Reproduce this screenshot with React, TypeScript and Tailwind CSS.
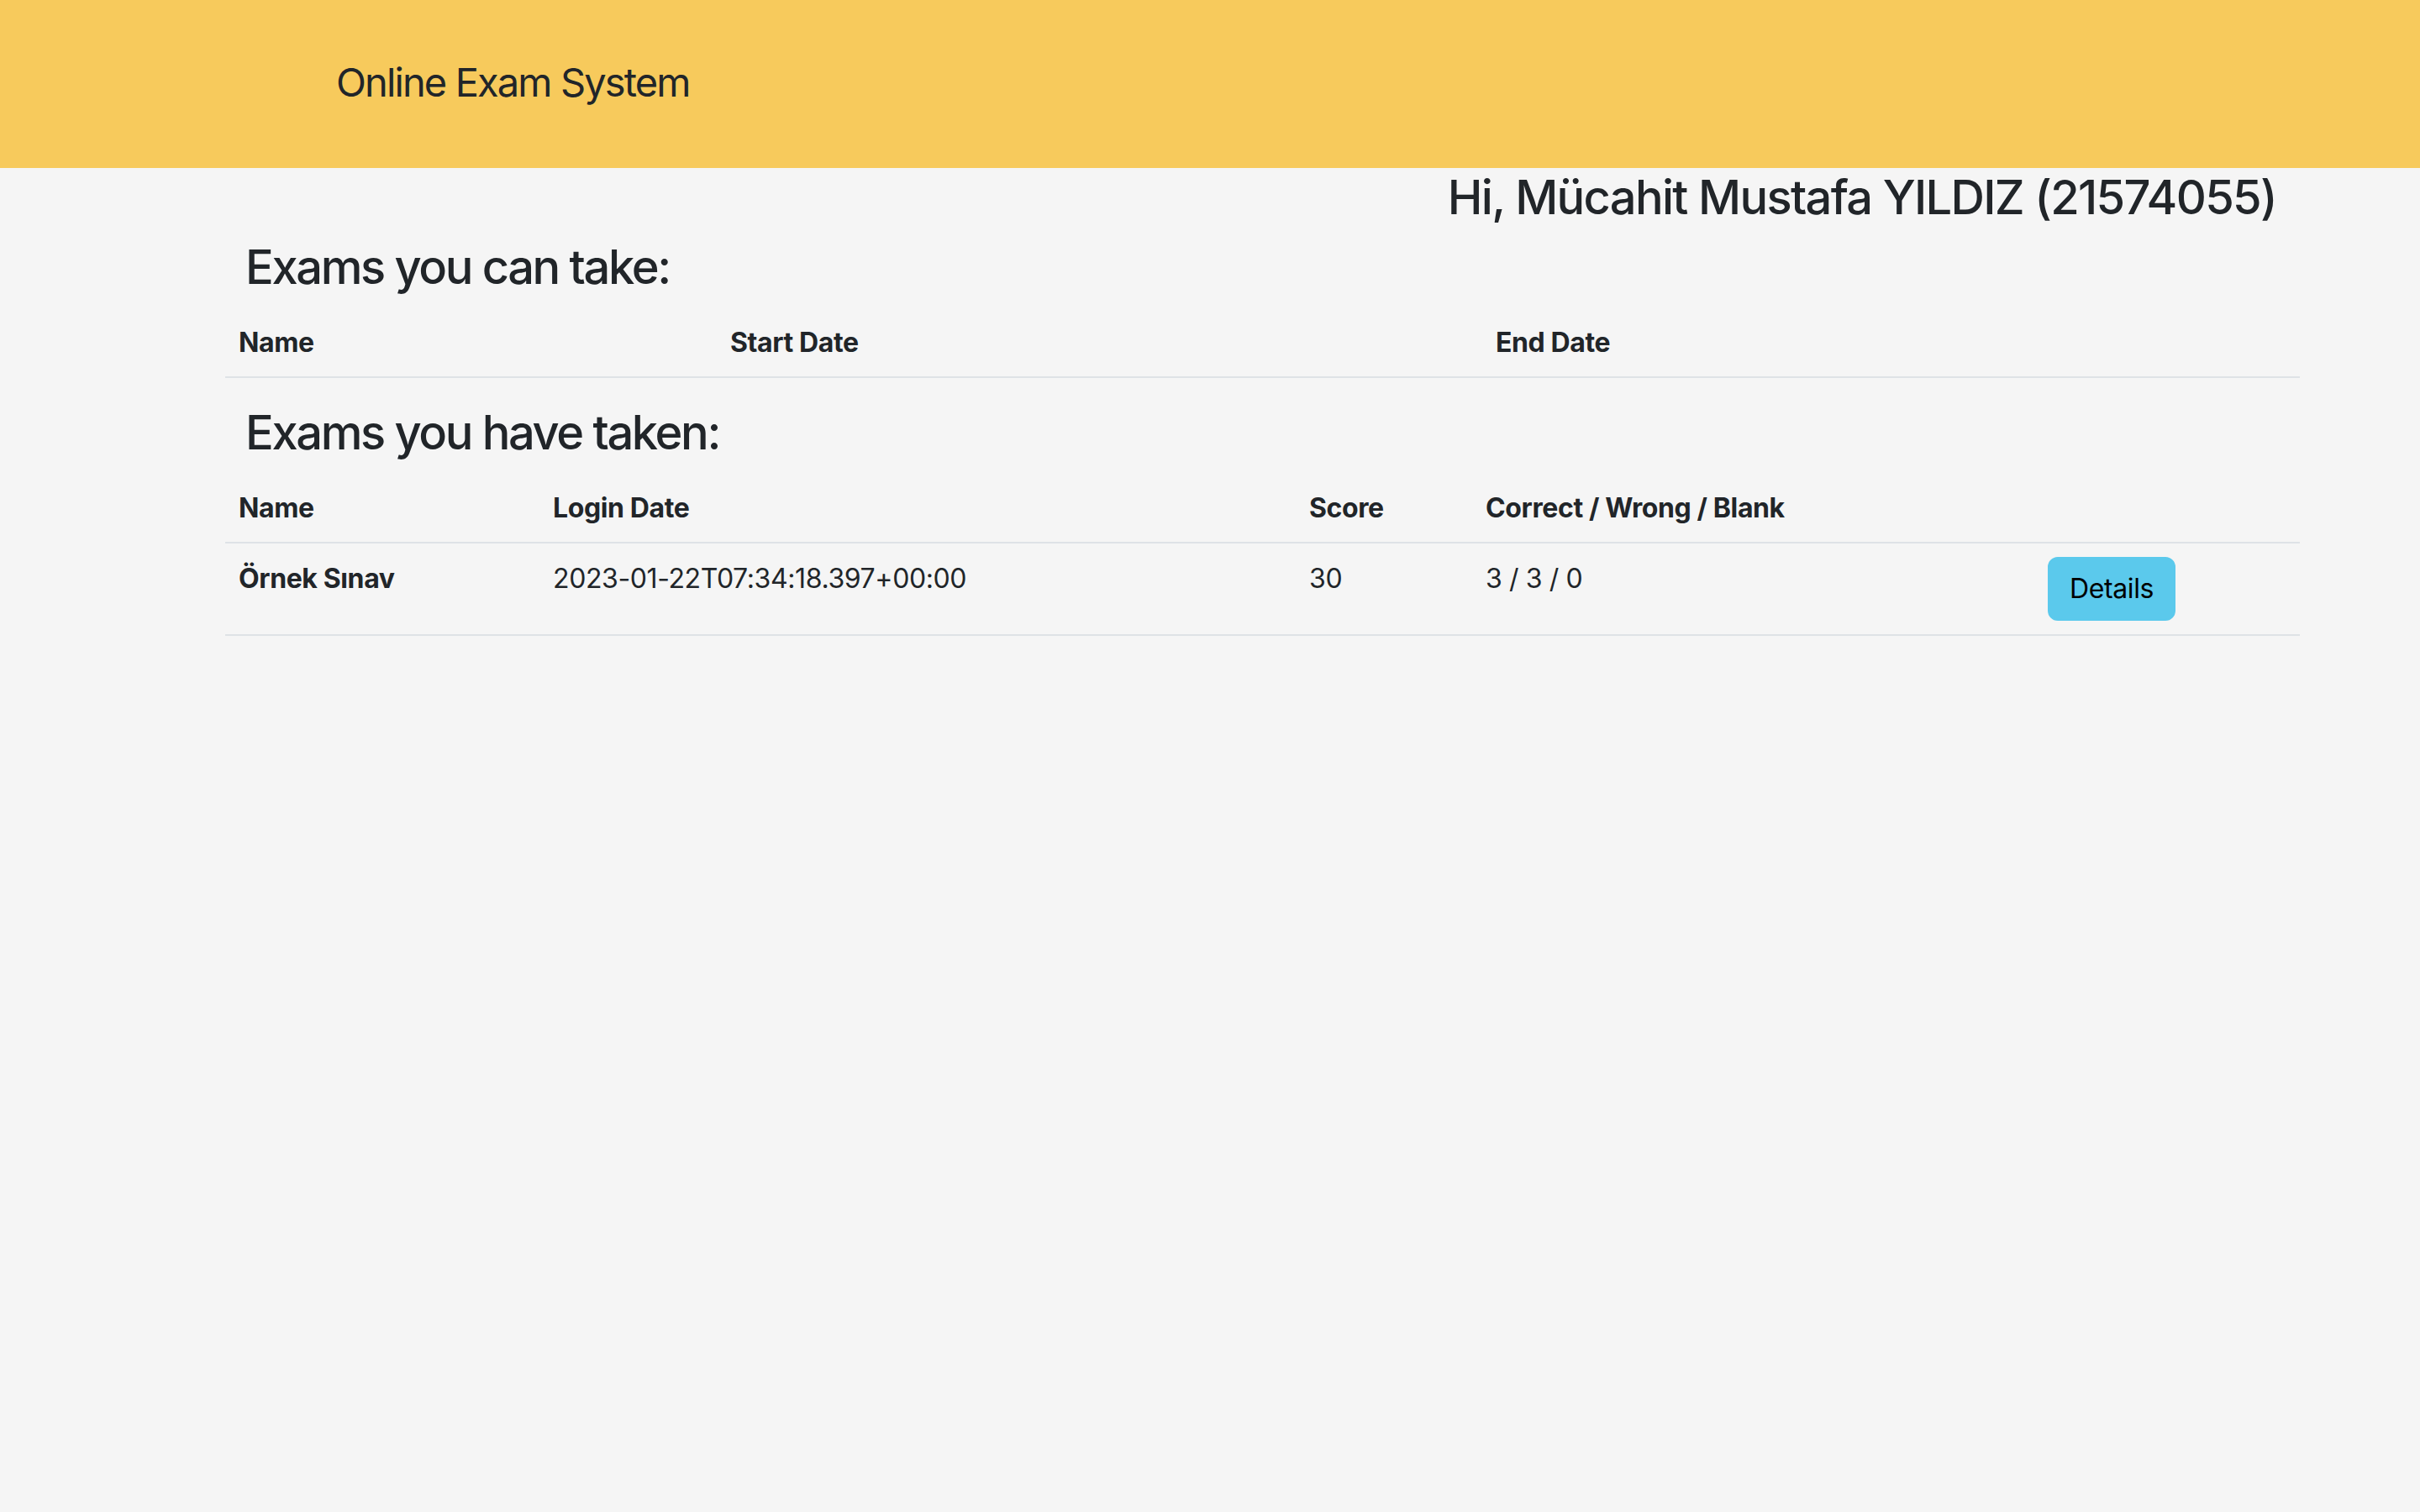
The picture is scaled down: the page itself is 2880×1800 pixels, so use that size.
const font = { fontFamily: "Inter, 'Noto Sans', sans-serif" };

const takenExams = [
  {
    name: "Örnek Sınav",
    loginDate: "2023-01-22T07:34:18.397+00:00",
    score: 30,
    correct: 3,
    wrong: 3,
    blank: 0,
  },
];

const Header = () => (
  <header className="h-[200px] bg-[#f7ca5c] flex items-center pl-[400px] pb-[6px]">
    <span className="text-[47px] leading-none tracking-[-0.04em] text-[#212529]">
      Online Exam System
    </span>
  </header>
);

const App = () => {
  return (
    <div
      style={font}
      className="min-h-screen bg-[#f5f5f5] text-[#212529] text-[32px] leading-[48px] tracking-[-0.012em]"
    >
      <Header />
      <main className="ml-[268px] w-[2469px]">
        <h3 className="text-[56px] leading-[67px] font-medium tracking-[-0.03em] text-right pr-[28px] pt-[2px] mb-[16px]">
          Hi, Mücahit Mustafa YILDIZ (21574055)
        </h3>

        <h3 className="text-[56px] leading-[67px] font-medium tracking-[-0.042em] pl-[24px] mb-[16px]">
          Exams you can take:
        </h3>
        <table className="w-full table-fixed border-collapse mb-[32px]">
          <colgroup>
            <col className="w-[585px]" />
            <col className="w-[911px]" />
            <col />
          </colgroup>
          <thead>
            <tr className="border-b-2 border-[#dee2e6] text-left">
              <th className="p-[16px] font-bold">Name</th>
              <th className="p-[16px] font-bold">Start Date</th>
              <th className="p-[16px] font-bold">End Date</th>
            </tr>
          </thead>
          <tbody></tbody>
        </table>

        <h3 className="text-[56px] leading-[67px] font-medium tracking-[-0.042em] pl-[24px] mb-[16px]">
          Exams you have taken:
        </h3>
        <table className="w-full table-fixed border-collapse">
          <colgroup>
            <col className="w-[374px]" />
            <col className="w-[900px]" />
            <col className="w-[210px]" />
            <col className="w-[669px]" />
            <col />
          </colgroup>
          <thead>
            <tr className="border-b-2 border-[#dee2e6] text-left">
              <th className="p-[16px] font-bold">Name</th>
              <th className="p-[16px] font-bold">Login Date</th>
              <th className="p-[16px] font-bold">Score</th>
              <th className="p-[16px] font-bold">Correct / Wrong / Blank</th>
              <th className="p-[16px]"></th>
            </tr>
          </thead>
          <tbody>
            {takenExams.map((exam) => (
              <tr key={exam.name} className="border-b-2 border-[#dee2e6] align-top">
                <th className="p-[16px] pt-[18px] font-bold text-left">{exam.name}</th>
                <td className="p-[16px] pt-[18px]">{exam.loginDate}</td>
                <td className="p-[16px] pt-[18px]">{exam.score}</td>
                <td className="p-[16px] pt-[18px]">
                  {exam.correct} / {exam.wrong} / {exam.blank}
                </td>
                <td className="p-[16px]">
                  <button className="bg-[#5bc9ec] text-black rounded-[12px] px-[24px] py-[12px] border-2 border-[#5bc9ec] leading-[48px]">
                    Details
                  </button>
                </td>
              </tr>
            ))}
          </tbody>
        </table>
      </main>
    </div>
  );
};

export default App;
